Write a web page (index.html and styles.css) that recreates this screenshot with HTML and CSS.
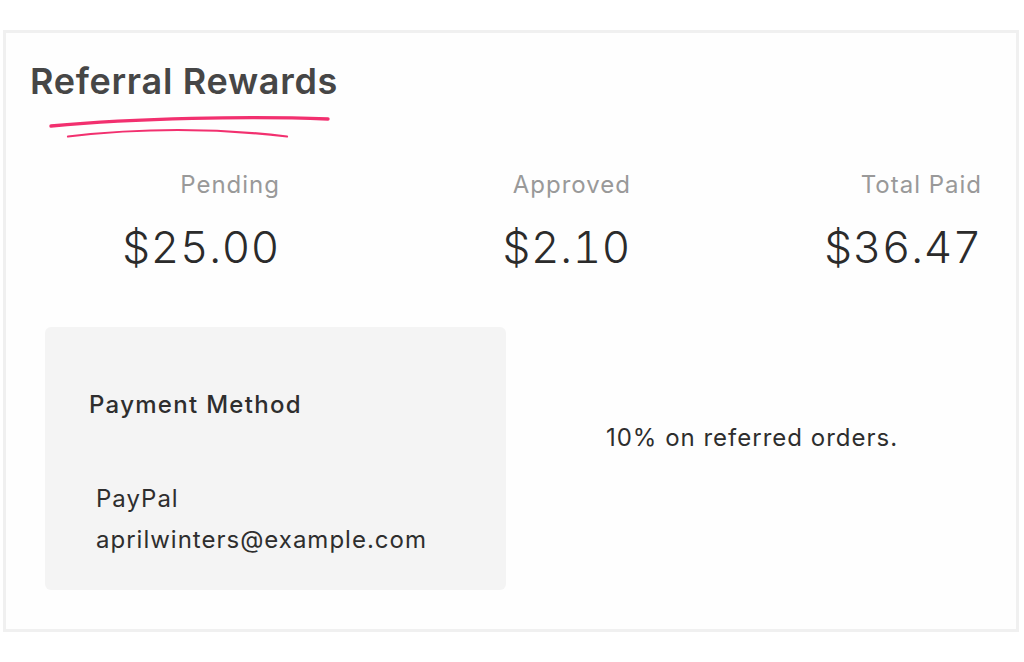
FILE: index.html
```html
<!DOCTYPE html>
<html lang="en">
<head>
    <meta charset="UTF-8">
    <meta name="viewport" content="width=device-width, initial-scale=1.0">
    <title>Referral Rewards</title>
    <link rel="stylesheet" href="styles.css">
</head>
<body>
    <div class="card">
        <h1>Referral Rewards</h1>
        <!-- brush underline -->
        <svg class="brush" width="290" height="30" viewBox="0 0 290 30">
            <path d="M3 14 C 90 6, 200 4, 280 7" stroke="#f2306f" stroke-width="3.4" fill="none" stroke-linecap="round"/>
            <path d="M20 24.5 Q 130 11.5, 239 24.5" stroke="#f2306f" stroke-width="2.2" fill="none" stroke-linecap="round"/>
        </svg>

        <div class="stats">
            <div class="stat">
                <div class="stat-label">Pending</div>
                <div class="stat-value">$25.00</div>
            </div>
            <div class="stat">
                <div class="stat-label">Approved</div>
                <div class="stat-value">$2.10</div>
            </div>
            <div class="stat">
                <div class="stat-label">Total Paid</div>
                <div class="stat-value">$36.47</div>
            </div>
        </div>

        <div class="details">
            <div class="payment">
                <div class="payment-title">Payment Method</div>
                <div class="payment-info">
                    <div>PayPal</div>
                    <div>aprilwinters@example.com</div>
                </div>
            </div>
            <div class="rate">10% on referred orders.</div>
        </div>
    </div>
</body>
</html>
```

FILE: styles.css
```css
body {
    margin: 0;
    padding: 0;
    background: #fff;
    font-family: 'Inter', 'Noto Sans', Arial, sans-serif;
    color: #333;
}
.card {
    box-sizing: border-box;
    margin: 30px 5px 0 3px;
    height: 602px;
    border: 3px solid #f0f0f0;
    background: #fefefe;
    padding: 26px 0 0 24px;
}
h1 {
    margin: 0;
    font-size: 36px;
    font-weight: 600;
    line-height: 44px;
    letter-spacing: 0.7px;
    color: #464646;
}
.brush {
    display: block;
    margin: 9px 0 0 18px;
}
.stats {
    display: grid;
    grid-template-columns: repeat(3, 250px);
    column-gap: 101px;
    margin-top: 28px;
}
.stat {
    text-align: right;
}
.stat-label {
    font-size: 24px;
    line-height: 29px;
    letter-spacing: 1px;
    color: #999;
}
.stat-value {
    margin-top: 22px;
    font-size: 44px;
    font-weight: 300;
    line-height: 53px;
    letter-spacing: 0.7px;
    font-variant-numeric: tabular-nums;
    color: #2b2b2b;
}
.details {
    display: flex;
    margin: 53px 0 0 15px;
    padding-right: 18px;
}
.payment {
    box-sizing: border-box;
    width: 461px;
    height: 263px;
    background: #f4f4f4;
    border-radius: 6px;
    padding: 63px 0 0 44px;
}
.payment-title {
    font-size: 24px;
    font-weight: 500;
    line-height: 29px;
    letter-spacing: 1.3px;
    color: #2e2e2e;
}
.payment-info {
    margin: 59px 0 0 7px;
    font-size: 24px;
    line-height: 41px;
    letter-spacing: 1px;
    color: #2e2e2e;
}
.rate {
    flex: 1;
    padding-top: 96px;
    text-align: center;
    font-size: 24px;
    line-height: 29px;
    letter-spacing: 1px;
    color: #2e2e2e;
}
```
